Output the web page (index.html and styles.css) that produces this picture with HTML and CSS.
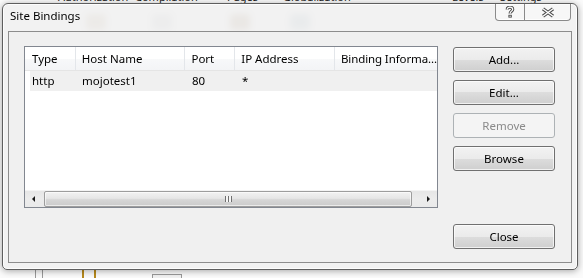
FILE: index.html
```html
<!DOCTYPE html>
<html lang="en">
<head>
    <meta charset="UTF-8">
    <title>Site Bindings</title>
    <link rel="stylesheet" href="styles.css">
</head>
<body>
    <div class="desktop">
        <!-- IIS Manager feature view behind the dialog -->
        <div class="behind-labels">
            <span class="lbl-auth">Authorization</span>
            <span class="lbl-comp">Compilation</span>
            <span class="lbl-pages">Pages</span>
            <span class="lbl-glob">Globalization</span>
            <span class="lbl-levels">Levels</span>
            <span class="lbl-settings">Settings</span>
        </div>
        <div class="behind-icons">
            <span class="blob blob-a"></span>
            <span class="blob blob-b"></span>
            <span class="blob blob-c"></span>
            <span class="blob blob-d"></span>
        </div>
        <div class="behind-bottom">
            <span class="pipe"></span>
            <span class="pipe"></span>
            <span class="clip"></span>
            <span class="pen"></span>
        </div>

        <div class="dialog">
            <div class="titlebar">
                <span class="title">Site Bindings</span>
                <div class="caption-btns">
                    <span class="cap cap-help">
                        <svg width="10" height="12" viewBox="0 0 10 12">
                            <path d="M2.2 3.6 C2.2 1.9 3.5 1.2 5 1.2 C6.6 1.2 7.7 2.1 7.7 3.4 C7.7 5 5.1 5.4 5.1 7.4" fill="none" stroke="#4d4d4d" stroke-width="3.2"/>
                            <rect x="3.4" y="8.8" width="3.4" height="2.8" fill="#4d4d4d"/>
                            <path d="M2.2 3.6 C2.2 1.9 3.5 1.2 5 1.2 C6.6 1.2 7.7 2.1 7.7 3.4 C7.7 5 5.1 5.4 5.1 7.4" fill="none" stroke="#fff" stroke-width="1.2"/>
                            <rect x="4.4" y="9.7" width="1.4" height="1" fill="#fff"/>
                        </svg>
                    </span>
                    <span class="cap cap-close">
                        <svg width="14" height="11" viewBox="0 0 14 11">
                            <path d="M2 1.8 L12 9.2 M12 1.8 L2 9.2" fill="none" stroke="#4d4d4d" stroke-width="3.4"/>
                            <path d="M2 1.8 L12 9.2 M12 1.8 L2 9.2" fill="none" stroke="#fff" stroke-width="1.4"/>
                        </svg>
                    </span>
                </div>
            </div>

            <div class="client">
                <div class="listview">
                    <div class="lv-header">
                        <div class="hcol col-type">Type</div>
                        <div class="hcol col-host">Host Name</div>
                        <div class="hcol col-port">Port</div>
                        <div class="hcol col-ip">IP Address</div>
                        <div class="hcol col-info">Binding Informa...</div>
                    </div>
                    <div class="lv-rows">
                        <div class="lv-row">
                            <div class="cell col-type">http</div>
                            <div class="cell col-host">mojotest1</div>
                            <div class="cell col-port">80</div>
                            <div class="cell col-ip">*</div>
                            <div class="cell col-info"></div>
                        </div>
                    </div>
                    <div class="hscroll">
                        <span class="sb-arrow sb-left"></span>
                        <div class="sb-track">
                            <div class="sb-thumb"><span class="grip"></span></div>
                        </div>
                        <span class="sb-arrow sb-right"></span>
                    </div>
                </div>

                <div class="side-btns">
                    <button class="btn">Add...</button>
                    <button class="btn">Edit...</button>
                    <button class="btn" disabled>Remove</button>
                    <button class="btn">Browse</button>
                </div>

                <button class="btn btn-close">Close</button>
            </div>
        </div>
    </div>
</body>
</html>
```

FILE: styles.css
```css
/* Stil general */
* {
    box-sizing: border-box;
}

body {
    margin: 0;
    font-family: "Noto Sans", "Segoe UI", sans-serif;
    font-size: 11.5px;
    color: #000;
    background-color: #fbfbfb;
}

.desktop {
    position: relative;
    width: 583px;
    height: 278px;
    overflow: hidden;
    background-color: #fbfbfb;
}

/* Ce se vede in spatele dialogului */
.behind-labels {
    position: absolute;
    top: -10px;
    left: 0;
    width: 583px;
    height: 14px;
    font-size: 11px;
    line-height: 14px;
    color: #1a1a1a;
}

.behind-labels span {
    position: absolute;
    top: 0;
    white-space: nowrap;
}

.lbl-auth { left: 58px; }
.lbl-comp { left: 135px; }
.lbl-pages { left: 227px; }
.lbl-glob { left: 283px; }
.lbl-levels { left: 452px; }
.lbl-settings { left: 500px; }

.behind-icons .blob {
    position: absolute;
    top: 14px;
    width: 20px;
    height: 16px;
    border-radius: 4px;
    opacity: 0.55;
}

.blob-a { left: 86px; background-color: #b69e80; }
.blob-b { left: 152px; width: 26px; background-color: #b9bcc0; }
.blob-c { left: 230px; background-color: #9c7a55; }
.blob-d { left: 290px; width: 12px; background-color: #8fa7b4; }

.behind-bottom span {
    position: absolute;
    top: 270px;
}

.behind-bottom .pipe {
    left: 35px;
    width: 1px;
    height: 10px;
    background-color: #9a9a9a;
}

.behind-bottom .pipe + .pipe {
    left: 42px;
}

.behind-bottom .clip {
    left: 82px;
    width: 14px;
    height: 12px;
    border: 2px solid #b88a1c;
    border-top: none;
}

.behind-bottom .pen {
    left: 152px;
    top: 274px;
    width: 30px;
    height: 8px;
    border: 1px solid #9a9a9a;
    background-color: #f2f2f2;
}

/* Fereastra de dialog */
.dialog {
    position: absolute;
    left: 2px;
    top: 3px;
    width: 576px;
    height: 267px;
    display: flex;
    flex-direction: column;
    padding: 0 5px 6px 5px;
    border: 1px solid #5e5e5e;
    border-radius: 6px 6px 5px 5px;
    background-color: rgba(240, 240, 240, 0.86);
    backdrop-filter: blur(3px);
    box-shadow: 0 1px 7px rgba(0, 0, 0, 0.35), inset 0 0 0 1px rgba(255, 255, 255, 0.85);
}

.titlebar {
    height: 27px;
    display: flex;
    align-items: flex-start;
}

.title {
    padding: 4px 0 0 2px;
    font-size: 11.5px;
    line-height: 16px;
}

.caption-btns {
    display: flex;
    height: 17px;
    margin-left: auto;
    margin-right: 1px;
    border: 1px solid #8a8a8a;
    border-top: none;
    border-radius: 0 0 4px 4px;
    background-color: rgba(255, 255, 255, 0.35);
    box-shadow: inset 0 -1px 0 rgba(255, 255, 255, 0.8);
}

.cap {
    display: flex;
    align-items: center;
    justify-content: center;
}

.cap-help {
    width: 29px;
    border-right: 1px solid #8a8a8a;
}

.cap-close {
    width: 45px;
}

/* Zona client */
.client {
    height: 232px;
    display: grid;
    grid-template-columns: 414px 102px;
    grid-template-rows: 162px 25px;
    column-gap: 15px;
    row-gap: 16px;
    padding: 14px 16px 13px 15px;
    border: 1px solid #8d8d8d;
    background-color: #f0f0f0;
}

/* Lista de binding-uri */
.listview {
    display: flex;
    flex-direction: column;
    border: 1px solid #828790;
    background-color: #ffffff;
    overflow: hidden;
}

.lv-header {
    display: flex;
    height: 24px;
    border-bottom: 1px solid #e5e5e5;
    background: linear-gradient(#ffffff, #ffffff 50%, #f8f9fa 50%, #f3f4f6);
}

.hcol {
    padding-left: 6px;
    line-height: 23px;
    white-space: nowrap;
    overflow: hidden;
    border-right: 1px solid #e3e6ea;
}

.hcol.col-type {
    width: 51px;
    padding-left: 7px;
}

.col-host { width: 110px; }
.col-port { width: 50px; }
.col-ip { width: 100px; }

.col-info {
    flex: 1;
}

.hcol.col-info {
    border-right: none;
    overflow: visible;
    letter-spacing: -0.1px;
}

.lv-rows {
    flex: 1;
}

.lv-row {
    display: flex;
    height: 20px;
    margin-left: 5px;
    line-height: 20px;
    background-color: #f0f0f0;
}

.cell {
    padding-left: 6px;
    white-space: nowrap;
}

.cell.col-type {
    width: 46px;
    padding-left: 2px;
}

/* Bara de derulare orizontala */
.hscroll {
    display: flex;
    height: 17px;
    border-top: 1px solid #f4f4f4;
    background: linear-gradient(#e6e6e6, #ececec 50%, #eaeaea);
}

.sb-arrow {
    width: 17px;
    display: flex;
    align-items: center;
    justify-content: center;
}

.sb-arrow::before {
    content: "";
    border-top: 3px solid transparent;
    border-bottom: 3px solid transparent;
}

.sb-left::before {
    border-right: 3px solid #1a1a1a;
}

.sb-right::before {
    border-left: 3px solid #1a1a1a;
}

.sb-track {
    flex: 1;
    padding: 0 8px 0 2px;
    display: flex;
}

.sb-thumb {
    flex: 1;
    display: flex;
    align-items: center;
    justify-content: center;
    border: 1px solid #9d9d9d;
    border-radius: 2px;
    background: linear-gradient(#f2f2f2, #e6e6e6 45%, #d6d6d6 55%, #cbcbcb);
    box-shadow: inset 0 0 0 1px rgba(255, 255, 255, 0.6);
}

.grip {
    width: 7px;
    height: 6px;
    background: repeating-linear-gradient(to right, #6f6f6f 0, #6f6f6f 1px, #f6f6f6 1px, #f6f6f6 3px);
}

/* Butoane */
.side-btns {
    display: flex;
    flex-direction: column;
    gap: 8px;
    padding-top: 1px;
}

.btn {
    height: 25px;
    padding: 0;
    font-family: inherit;
    font-size: 11.5px;
    color: #000;
    border: 1px solid #707070;
    border-radius: 3px;
    background: linear-gradient(#f2f2f2, #ebebeb 50%, #dddddd 50%, #cfcfcf);
    box-shadow: inset 0 0 0 1px rgba(255, 255, 255, 0.7);
}

.btn:disabled {
    color: #8a8a8a;
    border-color: #adb2b5;
    background: #f4f4f4;
    box-shadow: none;
}

.btn-close {
    grid-column: 2;
    grid-row: 2;
}
```
